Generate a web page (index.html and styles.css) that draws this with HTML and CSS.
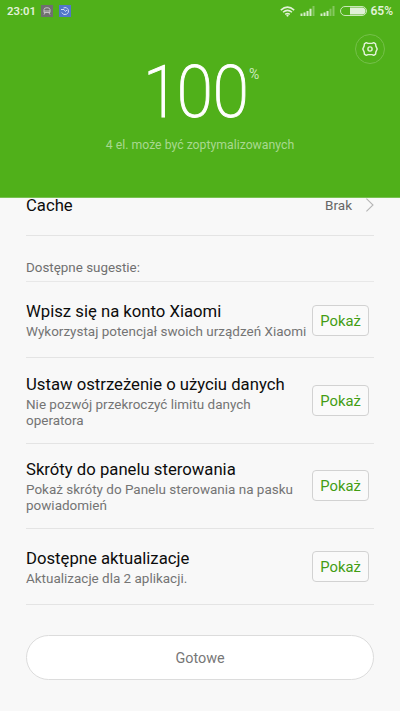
FILE: index.html
```html
<!DOCTYPE html>
<html lang="pl">
<head>
<meta charset="utf-8">
<title>Optymalizacja</title>
<link rel="stylesheet" href="styles.css">
</head>
<body>
<header class="hero">
  <div class="status">
    <span class="clock">23:01</span>
    <svg class="app" width="12" height="12" viewBox="0 0 12 12"><rect width="12" height="12" fill="#6f6f6f"/><g fill="none" stroke="#c4c4c4"><path d="M3 6V4.500q0-1.800 3-1.800t3 1.800V7.500H3V6h6M4 8l-1 1.600M8 8l1 1.600"/></g></svg>
    <svg class="app second" width="12" height="12" viewBox="0 0 12 12"><rect width="12" height="12" fill="#5277c9"/><g fill="none" stroke="#d3def5"><path d="M4.500 2.900A3.500 3.500 0 1 1 2.800 7.500M2 4.500h3l1.500 2L8 5"/></g></svg>
    <div class="indicators">
      <svg class="wifi" width="15" height="11" viewBox="0 0 15 11"><g fill="none" stroke="#e2f2d8" stroke-width="1.5"><path d="M.8 4.1Q7.5-1.8 14.2 4.1M3 6.3q4.5-3.8 9 0M5.2 8.3q2.3-1.8 4.6 0"/></g><circle cx="7.5" cy="9.6" r="1.1" fill="#e2f2d8"/></svg>
      <svg class="signal" width="15" height="10" viewBox="0 0 15 10"><g fill="#d5edc8"><path d="M.5 7.5h2V10h-2zM3.5 6.5h2V10h-2zM6.5 5h2v5h-2zM9.5 2.8h2V10h-2z"/><path d="M12.5 0h2v10h-2z" opacity=".4"/></g></svg>
      <svg class="signal next" width="15" height="10" viewBox="0 0 15 10"><g fill="#d5edc8"><path d="M.5 7.5h2V10h-2zM3.5 6.5h2V10h-2zM6.5 5h2v5h-2z"/><path d="M9.5 2.8h2V10h-2zM12.5 0h2v10h-2z" opacity=".4"/></g></svg>
      <svg class="battery" width="27" height="10" viewBox="0 0 27 10"><rect x=".5" y=".5" width="26" height="9" rx="4.5" fill="none" stroke="#c9e8b9"/><path d="M10 1.5h12a3.5 3.5 0 0 1 0 7H10z" fill="#e0f0d8"/></svg>
      <span class="percent">65%</span>
    </div>
  </div>
  <div class="tools">
    <span class="settings"><svg width="16" height="16" viewBox="0 0 16 16" fill="none" stroke="#e2f2d8" stroke-width="1.4" stroke-linejoin="round"><path d="M4.300 1.600 6 2.400h4l1.700-.8 1.900 1.300.2 2L15.200 8l-1.400 3.100-.2 2-1.900 1.300-1.700-.8H6l-1.700.8-1.900-1.300-.2-2L.8 8l1.400-3.100.2-2z"/><circle cx="8" cy="8" r="2.100"/></svg></span>
  </div>
  <div class="score"><div class="digits"><span class="one">1</span><span>00</span></div><span class="unit">%</span></div>
  <p class="summary">4 el. może być zoptymalizowanych</p>
</header>
<main class="content">
  <div class="cache"><span class="title">Cache</span><span class="value">Brak</span><svg width="9" height="14" viewBox="0 0 9 14" fill="none" stroke="#b5b5b5" stroke-width="1.1"><path d="M1.4.7 8 7l-6.6 6.3"/></svg></div>
  <h2 class="section">Dostępne sugestie:</h2>
  <section class="row first"><div class="copy"><h3 class="title">Wpisz się na konto Xiaomi</h3><p class="desc">Wykorzystaj potencjał swoich urządzeń Xiaomi</p></div><button class="show">Pokaż</button></section>
  <section class="row second-row"><div class="copy"><h3 class="title">Ustaw ostrzeżenie o użyciu danych</h3><p class="desc">Nie pozwój przekroczyć limitu danych<br>operatora</p></div><button class="show">Pokaż</button></section>
  <section class="row third"><div class="copy"><h3 class="title">Skróty do panelu sterowania</h3><p class="desc">Pokaż skróty do Panelu sterowania na pasku<br>powiadomień</p></div><button class="show">Pokaż</button></section>
  <section class="row fourth"><div class="copy"><h3 class="title">Dostępne aktualizacje</h3><p class="desc">Aktualizacje dla 2 aplikacji.</p></div><button class="show">Pokaż</button></section>
  <button class="done">Gotowe</button>
</main>
</body>
</html>
```
FILE: styles.css
```css
* { box-sizing: border-box; }
body { margin: 0; height: 711px; overflow: hidden; background: #f8f8f8; font-family: Roboto, sans-serif; color: #0c0c0c; }
h2, h3, p { margin: 0; font-weight: 400; }
svg { display: block; flex: none; }
button { font-family: inherit; padding: 0; }
.hero { height: 198px; background: #50b01a; border-bottom: 1px solid #78c250; }
.status { display: flex; align-items: center; height: 22px; padding: 0 7px; color: #e2f2d8; font-size: 11.5px; font-weight: 600; line-height: 23px; }
.clock { width: 34px; white-space: nowrap; font-size: 11.3px; }
.second { margin-left: 6px; }
.indicators { display: flex; align-items: center; margin-left: auto; }
.wifi { margin-right: 5px; }
.next { margin-left: 5px; }
.battery { margin: 0 3px 0 5px; }
.percent { font-size: 12px; line-height: 24px; }
.tools { display: flex; justify-content: flex-end; height: 43px; padding: 12px 15px 0 0; }
.settings { display: flex; align-items: center; justify-content: center; width: 30px; height: 30px; border: 1px solid #75c04a; border-radius: 50%; }
.score { display: flex; height: 54px; padding-left: 143px; color: #fff; }
.digits { display: flex; flex: none; width: 106px; font-size: 72px; font-weight: 200; line-height: 56px; -webkit-text-stroke: 1px #fff; transform: scaleX(.91); transform-origin: left; }
.one { flex: none; width: 37px; }
.unit { width: 14px; font-size: 14px; font-weight: 400; line-height: 18px; color: #cbe9bc; }
.summary { margin-top: 17px; text-align: center; font-size: 12.25px; line-height: 18px; color: #a8d990; }
.content { padding: 0 26px; }
.cache { display: flex; align-items: center; height: 38px; padding-bottom: 22px; border-bottom: 1px solid #e4e4e4; }
.title { font-size: 16.7px; line-height: 20px; white-space: nowrap; }
.value { margin: -2px 13px 0 auto; font-size: 13.5px; line-height: 14px; color: #666; }
.cache svg { margin-top: -2px; }
.section { height: 46px; padding-top: 23px; border-bottom: 1px solid #e8e8e8; font-size: 13.4px; line-height: 18px; color: #707070; }
.row { display: flex; border-bottom: 1px solid #e4e4e4; }
.copy { width: 286px; flex: none; }
.first { height: 76px; padding-top: 20px; }
.second-row { height: 86px; padding-top: 17px; }
.third { height: 85px; padding-top: 16px; }
.fourth { height: 76px; padding-top: 20px; }
.desc { font-size: 13.47px; line-height: 15.5px; color: #747474; white-space: nowrap; padding-top: 2px; }
.fourth .desc { padding-top: 1.5px; }
.show { width: 57px; height: 31px; border: 1px solid #d2d2d2; border-radius: 4px; background: #fafafa; color: #439d13; font-size: 14.8px; }
.first .show { margin-top: 3px; }
.second-row .show { margin-top: 10px; }
.third .show { margin-top: 10px; }
.fourth .show { margin-top: 2px; }
.done { display: block; width: 348px; height: 45px; margin-top: 30px; padding-top: 2px; border: 1px solid #dcdcdc; border-radius: 23px; background: #fff; color: #777; font-size: 14.4px; }
```
